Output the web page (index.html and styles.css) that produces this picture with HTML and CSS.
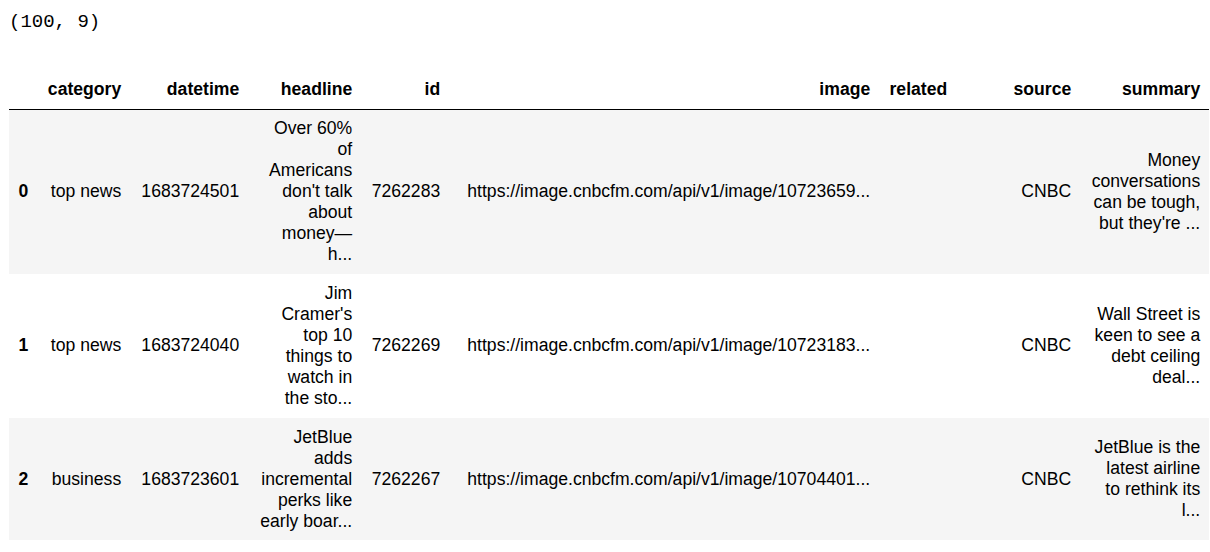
FILE: index.html
```html
<!DOCTYPE html>
<html>
<head>
<meta charset="utf-8">
<link rel="stylesheet" href="styles.css">
</head>
<body>
<div class="output">
<pre class="shape">(100, 9)</pre>
<table class="dataframe">
<colgroup>
<col class="c-idx"><col class="c-cat"><col class="c-dt"><col class="c-head"><col class="c-id"><col class="c-img"><col class="c-rel"><col class="c-src"><col class="c-sum">
</colgroup>
<thead>
<tr><th></th><th>category</th><th>datetime</th><th>headline</th><th>id</th><th>image</th><th>related</th><th>source</th><th>summary</th></tr>
</thead>
<tbody>
<tr class="odd"><th>0</th><td>top news</td><td>1683724501</td><td class="hl">Over 60% of Americans don't talk about money—h...</td><td>7262283</td><td>https://image.cnbcfm.com/api/v1/image/10723659...</td><td></td><td>CNBC</td><td>Money conversations can be tough, but they're ...</td></tr>
<tr><th>1</th><td>top news</td><td>1683724040</td><td class="hl">Jim Cramer's top 10 things to watch in the sto...</td><td>7262269</td><td>https://image.cnbcfm.com/api/v1/image/10723183...</td><td></td><td>CNBC</td><td>Wall Street is keen to see a debt ceiling deal...</td></tr>
<tr class="odd"><th>2</th><td>business</td><td>1683723601</td><td class="hl">JetBlue adds incremental perks like early boar...</td><td>7262267</td><td>https://image.cnbcfm.com/api/v1/image/10704401...</td><td></td><td>CNBC</td><td>JetBlue is the latest airline to rethink its l...</td></tr>
</tbody>
</table>
</div>
</body>
</html>
```
FILE: styles.css
```css
html, body {
  margin: 0;
  padding: 0;
  background: #fff;
}
.output {
  padding: 0 0 0 9px;
}
.shape {
  margin: 11px 0 37px 0;
  font-family: "Liberation Mono", monospace;
  font-size: 19px;
  line-height: 22px;
  color: #000;
}
.dataframe {
  border-collapse: collapse;
  border-spacing: 0;
  table-layout: fixed;
  width: 1200px;
  font-family: "Liberation Sans", Arial, sans-serif;
  font-size: 17.6px;
  line-height: 21px;
  color: #000;
}
.dataframe th, .dataframe td {
  padding: 8.8px;
  text-align: right;
  vertical-align: middle;
  font-weight: normal;
}
.dataframe td.hl {
  padding-left: 12px;
}
.dataframe thead th {
  font-weight: bold;
  border-bottom: 1px solid #000;
}
.dataframe tbody th {
  font-weight: bold;
}
.dataframe tbody tr.odd {
  background: #f5f5f5;
}
.c-idx { width: 28px; }
.c-cat { width: 93px; }
.c-dt { width: 118px; }
.c-head { width: 113px; }
.c-id { width: 88px; }
.c-img { width: 430px; }
.c-rel { width: 77px; }
.c-src { width: 124px; }
.c-sum { width: 129px; }
```
